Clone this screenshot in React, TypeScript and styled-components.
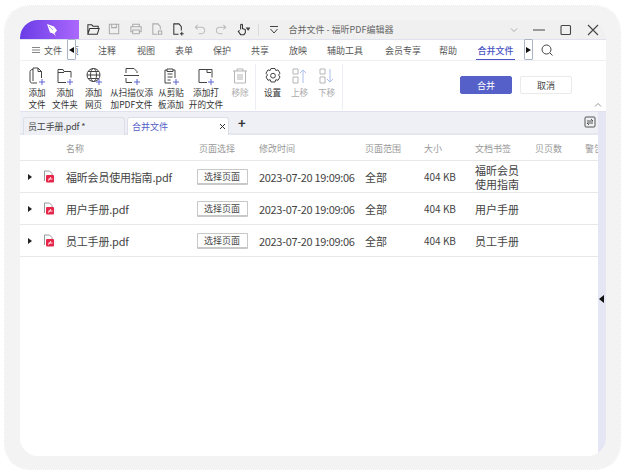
import React from 'react';
import styled, { createGlobalStyle } from 'styled-components';

const Global = createGlobalStyle`
  html, body { margin: 0; padding: 0; background: #fff; }
  body { font-family: "Noto Sans CJK SC", "Noto Sans", sans-serif; }
  * { box-sizing: border-box; }
`;

const Page = styled.div`
  width: 626px;
  height: 475px;
  padding: 6px 5px;
`;

const Frame = styled.div`
  width: 615px;
  height: 463px;
  padding: 14px 14px 13px 15px;
  background: #f3f3f3;
  border-radius: 24px;
  outline: 1px dotted #eaeaea;
`;

const Window = styled.div`
  height: 436px;
  background: #fff;
  border-radius: 18px;
  overflow: hidden;
  display: flex;
  flex-direction: column;
`;

const TitleBar = styled.div`
  height: 19px;
  flex: none;
  display: flex;
  align-items: center;
  background: #f0f0f0;
`;

const Logo = styled.div`
  width: 59px;
  height: 19px;
  flex: none;
  display: flex;
  align-items: center;
  justify-content: center;
  padding-left: 7px;
  background: linear-gradient(90deg, #6a3ce6, #ab68fd);
`;

const QuickBar = styled.div`
  display: flex;
  align-items: center;
  margin-left: 4px;
`;

const QuickSlot = styled.div`
  width: 21.3px;
  height: 19px;
  display: flex;
  align-items: center;
  justify-content: center;
`;

const TitleDivider = styled.div`
  width: 1px;
  height: 12px;
  margin: 0 9px 0 5px;
  background: #dcdcdc;
`;

const TitleText = styled.div`
  margin-left: 8px;
  flex: 1;
  font-size: 9px;
  line-height: 19px;
  color: #666;
  white-space: nowrap;
`;

const WindowControls = styled.div`
  display: flex;
  align-items: center;
  gap: 11px;
  margin-right: 5px;
`;

const RibbonTabs = styled.div`
  height: 22px;
  flex: none;
  display: flex;
  align-items: stretch;
  border-top: 1px solid #dfe1ee;
  border-bottom: 1px solid #f0f0f4;
  background: #fff;
  font-size: 9px;
  color: #555;
`;

const FileMenu = styled.div`
  width: 47px;
  padding-left: 12px;
  display: flex;
  align-items: center;
  gap: 4px;
`;

const ScrollBox = styled.div`
  width: 9px;
  height: 21px;
  margin-top: -1px;
  flex: none;
  display: flex;
  align-items: center;
  justify-content: center;
  background: #fff;
  border: 1px solid #aab6c6;
  border-radius: 1px;
`;

const RibbonList = styled.div`
  width: 448px;
  display: flex;
  align-items: stretch;
`;

const ClippedTab = styled.div`
  width: 3px;
  margin-right: 9px;
  flex: none;
  display: flex;
  align-items: center;
  justify-content: flex-end;
  overflow: hidden;
`;

const ClippedLabel = styled.span`
  flex: none;
`;

const RibbonTab = styled.div<{ $w: number; $active?: boolean }>`
  width: ${p => p.$w}px;
  flex: none;
  display: flex;
  align-items: center;
  justify-content: center;
  position: relative;
  margin-left: ${p => (p.$active ? '14px' : '0')};
  color: ${p => (p.$active ? '#4a55c4' : '#555')};
  font-weight: ${p => (p.$active ? 500 : 400)};
  &::after {
    content: '';
    display: ${p => (p.$active ? 'block' : 'none')};
    position: absolute;
    left: 0;
    right: 0;
    bottom: 0;
    height: 1.5px;
    background: #4a55c4;
  }
`;

const SearchSlot = styled.div`
  margin-left: 8px;
  display: flex;
  align-items: center;
`;

const Toolbar = styled.div`
  height: 51px;
  flex: none;
  display: flex;
  align-items: flex-start;
  background: #fff;
  border-bottom: 1px solid #dfe1ee;
  padding: 3px 0 0 3px;
  position: relative;
`;

const ToolGroup = styled.div<{ $w: number; $pad?: number }>`
  width: ${p => p.$w}px;
  height: 46px;
  flex: none;
  display: flex;
  padding-left: ${p => p.$pad || 0}px;
  border-right: 1px solid #eceef4;
`;

const Tool = styled.div<{ $w: number; $off?: boolean }>`
  width: ${p => p.$w}px;
  flex: none;
  display: flex;
  flex-direction: column;
  align-items: center;
  color: ${p => (p.$off ? '#aaa' : '#333')};
  font-size: 8.6px;
  line-height: 12px;
  text-align: center;
  white-space: nowrap;
`;

const ToolIcon = styled.div`
  height: 22px;
  padding-top: 2px;
  display: flex;
  align-items: center;
  justify-content: center;
`;

const ActionButton = styled.div<{ $primary?: boolean }>`
  width: 52px;
  height: 18px;
  display: flex;
  align-items: center;
  justify-content: center;
  font-size: 9px;
  border-radius: 2px;
  background: ${p => (p.$primary ? '#5560c8' : '#fff')};
  color: ${p => (p.$primary ? '#fff' : '#444')};
  border: 1px solid ${p => (p.$primary ? '#5560c8' : '#eaeaea')};
`;

const Actions = styled.div`
  display: flex;
  gap: 8px;
  margin: 12px 0 0 117px;
`;

const Collapse = styled.div`
  position: absolute;
  right: 4px;
  bottom: 3px;
  display: flex;
`;

const Body = styled.div`
  flex: 1;
  display: flex;
  min-height: 0;
`;

const Main = styled.div`
  flex: 1;
  min-width: 0;
  display: flex;
  flex-direction: column;
`;

const TabRow = styled.div`
  height: 23px;
  flex: none;
  display: flex;
  align-items: flex-end;
  gap: 2px;
  padding-left: 3px;
  background: #eef0f5;
  border-bottom: 2px solid #e4e7f0;
  position: relative;
`;

const DocTab = styled.div<{ $active?: boolean }>`
  width: 102px;
  height: 18px;
  margin-bottom: -2px;
  padding: 0 2px 0 4px;
  display: flex;
  align-items: center;
  justify-content: space-between;
  font-size: 9px;
  letter-spacing: ${p => (p.$active ? '0' : '-0.15px')};
  border: 1px solid #dcdfe8;
  border-bottom: none;
  border-radius: 3px 3px 0 0;
  background: ${p => (p.$active ? '#fff' : '#eef0f5')};
  color: ${p => (p.$active ? '#5560c8' : '#444')};
`;

const AddTab = styled.div`
  margin: 0 0 2px 7px;
  font-size: 13px;
  line-height: 16px;
  font-weight: 700;
  color: #333;
`;

const SwapIcon = styled.div`
  position: absolute;
  right: 2px;
  top: 4px;
  display: flex;
`;

const TableArea = styled.div`
  flex: 1;
  overflow: hidden;
`;

const SideStrip = styled.div`
  width: 8px;
  flex: none;
  background: #e4e7f3;
  display: flex;
  flex-direction: column;
  align-items: center;
  padding-top: 183px;
`;

const HeadRow = styled.div`
  height: 26px;
  padding-top: 2px;
  display: grid;
  grid-template-columns: 46px 133px 60px 106px 59px 51px 60px 50px 40px;
  align-items: center;
  border-bottom: 1px solid #e8e8e8;
  font-size: 9px;
  color: #999;
  white-space: nowrap;
`;

const Row = styled(HeadRow)`
  height: 32px;
  padding-top: 0;
  font-size: 11px;
  color: #444;
`;

const Lead = styled.div`
  display: flex;
  align-items: center;
  padding-left: 8px;
  gap: 11px;
`;

const Caret = styled.div`
  width: 0;
  height: 0;
  border-top: 3px solid transparent;
  border-bottom: 3px solid transparent;
  border-left: 4px solid #222;
`;

const NameCell = styled.div`
  letter-spacing: -0.2px;
`;

const PickButton = styled.div`
  width: 51px;
  height: 16px;
  margin-left: -2.5px;
  display: flex;
  align-items: center;
  justify-content: center;
  font-size: 9px;
  color: #444;
  background: #fff;
  border: 1px solid #c8c8c8;
  border-bottom-width: 2px;
  border-radius: 1px;
`;

const DateCell = styled.div`
  letter-spacing: -0.32px;
`;

const Bookmark = styled.div`
  line-height: 14px;
  white-space: normal;
`;

const SmallCell = styled.div`
  font-size: 10px;
`;

type IconProps = { size?: number; color?: string; children: React.ReactNode };

const Svg = ({ size = 18, color = '#444', children }: IconProps) => (
  <svg width={size} height={size} viewBox="0 0 18 18" fill="none" stroke={color} strokeWidth="1">
    {children}
  </svg>
);

const Plus = () => <path d="M11 15h6M14 12v6" stroke="#5a66d0" />;

const toolIcons: Record<string, React.ReactNode> = {
  file: (<><path d="M5 2.5C3.500 2.500 2 3 2 4.500V14c0 1.500 1 2 2.500 2H9" /><path d="M5 14V1h5l3.500 3.500V11" /><path d="M10 1v3.500h3.500" /><Plus /></>),
  folder: (<><path d="M10 15.500H2V2.500h5l1 2h7v6" /><path d="M2 5.500h6" /><Plus /></>),
  web: (<><circle cx="8.5" cy="8" r="6.500" /><ellipse cx="8.5" cy="8" rx="3" ry="6.500" /><path d="M2 8h13M3 4.500h11M3 11.500h11" /><Plus /></>),
  scan: (<><path d="M3 6V1.500h8l3 3V6M1 8.500h15M3 11v4.500h6" /><Plus /></>),
  clip: (<><path d="M9 16H3V3h2M11 3h2v8" /><path d="M5 2h6v2.500H5zM5.500 7h5M5.500 10h5M5.500 13h3" /><Plus /></>),
  open: (<><path d="M10 15.500H2V2.500h13v8" /><path d="M10 2.500v3h4" /><Plus /></>),
  trash: (<><path d="M2 4h14M6 4V2h6v2M3.500 4v12h11V4M7 7v6M9 7v6M11 7v6" /></>),
  gear: (<><path d="M7 1.500h4l.8 2 2.200-.6 2 3.300-1.500 1.800 1.500 2-2 3.300-2.200-.6-.8 2.300H7l-.8-2.300-2.200.6-2-3.300L3.500 8 2 6.200l2-3.300 2.200.6z" /><circle cx="9" cy="8.700" r="2.400" /></>),
  up: (<><path d="M2 2h5v5H2zM2 10h5v6H2z" /><path d="M12 16V3M9 6l3-3 3 3" stroke="#a9c0ea" /></>),
  down: (<><path d="M2 2h5v5H2zM2 10h5v6H2z" /><path d="M12 2v13M9 12l3 3 3-3" stroke="#a9c0ea" /></>),
};

const tools = [
  { key: 'file', w: 28, lines: ['添加', '文件'] },
  { key: 'folder', w: 28, lines: ['添加', '文件夹'] },
  { key: 'web', w: 29, lines: ['添加', '网页'] },
  { key: 'scan', w: 47, lines: ['从扫描仪添', '加PDF文件'] },
  { key: 'clip', w: 32, lines: ['从剪贴', '板添加'] },
  { key: 'open', w: 38, lines: ['添加打', '开的文件'] },
  { key: 'trash', w: 30, lines: ['移除'], off: true },
];

const tools2 = [
  { key: 'gear', w: 27, lines: ['设置'] },
  { key: 'up', w: 27, lines: ['上移'], off: true },
  { key: 'down', w: 27, lines: ['下移'], off: true },
];

const ribbon = [
  { label: '注释', w: 38 },
  { label: '视图', w: 40 },
  { label: '表单', w: 36 },
  { label: '保护', w: 40 },
  { label: '共享', w: 36 },
  { label: '放映', w: 40 },
  { label: '辅助工具', w: 54 },
  { label: '会员专享', w: 62 },
  { label: '帮助', w: 28 },
];

const rows = [
  { name: '福昕会员使用指南.pdf', mark: ['福昕会员', '使用指南'] },
  { name: '用户手册.pdf', mark: ['用户手册'] },
  { name: '员工手册.pdf', mark: ['员工手册'] },
];

const PdfIcon = () => (
  <svg width="12" height="13" viewBox="0 0 12 13" fill="none">
    <path d="M1.500 11V1h5l2.500 2.500V5" stroke="#999" />
    <rect x="3" y="5" width="8" height="7.500" rx="1" fill="#e8264a" />
    <path d="M5 10.500c2-1 2.500-2.500 2.500-3.500M5.500 9h4" stroke="#fff" strokeWidth="0.9" />
  </svg>
);

const ToolItem = ({ t }: { t: { key: string; w: number; lines: string[]; off?: boolean } }) => (
  <Tool $w={t.w} $off={t.off}>
    <ToolIcon>
      <Svg color={t.off ? '#b5b5b5' : '#444'}>{toolIcons[t.key]}</Svg>
    </ToolIcon>
    {t.lines.map(l => <div key={l}>{l}</div>)}
  </Tool>
);

const quick = [
  <path key="o" d="M2 13V3h4l1.500 1.500H13V7M2 13l2-6h10l-2 6z" />,
  <path key="s" d="M2.500 2.500h10v10h-10zM5 2.500v3.500h5V2.500" stroke="#aaa" />,
  <path key="p" d="M4 5V2.500h7V5M4 10.500H2V5h11v5.500h-2M4 8.500h7v4H4z" stroke="#aaa" />,
  <path key="n" d="M8 13H3V2h5.500L11 5v3M9 9.500h3.500v3.500H9z" stroke="#aaa" />,
  <path key="a" d="M8 13H3V2h5.500L11 5v4M9.500 12.500h4M11.500 10.500v4" stroke="#333" />,
  <path key="u" d="M5 3L2.500 5.500 5 8M3 5.500h6a3.500 3.500 0 0 1 0 7H6" stroke="#bbb" />,
  <path key="r" d="M10 3l2.500 2.500L10 8M12 5.500H6a3.500 3.500 0 0 0 0 7h3" stroke="#bbb" />,
  <path key="h" d="M6 8V3.500a1 1 0 0 1 2 0V7l3 1v3.500l-1.500 2H6L3.500 10 5 9M12.500 6.500h3l-1.500 2z" stroke="#333" />,
];

export default function App() {
  return (
    <Page>
      <Global />
      <Frame>
        <Window>
          <TitleBar>
            <Logo>
              <svg width="14" height="14" viewBox="0 0 14 14">
                <path d="M1 1l7 2.500 3 4-2.500 3 1.500 2.500-3-2.500-3-1z" fill="#fff" />
                <path d="M3 3l4 4" stroke="#a070f0" strokeWidth="0.7" />
              </svg>
            </Logo>
            <QuickBar>
              {quick.map((q, i) => (
                <QuickSlot key={i}>
                  <svg width="15" height="15" viewBox="0 0 16 16" fill="none" stroke="#333" strokeWidth="1.1">{q}</svg>
                </QuickSlot>
              ))}
              <TitleDivider />
              <svg width="12" height="12" viewBox="0 0 12 12" fill="none" stroke="#444" strokeWidth="1">
                <path d="M2 2.500h8M2.500 5l3.500 4 3.500-4" />
              </svg>
            </QuickBar>
            <TitleText>合并文件 - 福昕PDF编辑器</TitleText>
            <WindowControls>
              <svg width="12" height="12" viewBox="0 0 12 12" fill="none" stroke="#aaa" strokeWidth="1"><path d="M3 4.500l3 3 3-3" /></svg>
              <svg width="16" height="12" viewBox="0 0 16 12" fill="none" stroke="#444" strokeWidth="1.1"><path d="M2 6h12" /></svg>
              <svg width="16" height="12" viewBox="0 0 16 12" fill="none" stroke="#444" strokeWidth="1.1"><rect x="3" y="1.500" width="9.500" height="9" rx="1" /></svg>
              <svg width="16" height="12" viewBox="0 0 16 12" fill="none" stroke="#444" strokeWidth="1.1"><path d="M3 1l10 10M13 1L3 11" /></svg>
            </WindowControls>
          </TitleBar>

          <RibbonTabs>
            <FileMenu>
              <svg width="8" height="8" viewBox="0 0 8 8" stroke="#666" strokeWidth="0.8"><path d="M0 1.500h8M0 4h8M0 6.500h8" /></svg>
              文件
            </FileMenu>
            <ScrollBox>
              <svg width="5" height="6" viewBox="0 0 5 6"><path d="M5 0v6L0 3z" fill="#111" /></svg>
            </ScrollBox>
            <RibbonList>
              <ClippedTab><ClippedLabel>主页</ClippedLabel></ClippedTab>
              {ribbon.map(r => <RibbonTab key={r.label} $w={r.w}>{r.label}</RibbonTab>)}
              <RibbonTab $w={39} $active>合并文件</RibbonTab>
            </RibbonList>
            <ScrollBox>
              <svg width="5" height="6" viewBox="0 0 5 6"><path d="M0 0v6l5-3z" fill="#111" /></svg>
            </ScrollBox>
            <SearchSlot>
              <svg width="12" height="12" viewBox="0 0 12 12" fill="none" stroke="#444" strokeWidth="1"><circle cx="5.500" cy="5.500" r="4.500" /><path d="M9 9l2.500 2.500" /></svg>
            </SearchSlot>
          </RibbonTabs>

          <Toolbar>
            <ToolGroup $w={233}>
              {tools.map(t => <ToolItem key={t.key} t={t} />)}
            </ToolGroup>
            <ToolGroup $w={87} $pad={3}>
              {tools2.map(t => <ToolItem key={t.key} t={t} />)}
            </ToolGroup>
            <Actions>
              <ActionButton $primary>合并</ActionButton>
              <ActionButton>取消</ActionButton>
            </Actions>
            <Collapse>
              <svg width="8" height="6" viewBox="0 0 8 6" fill="none" stroke="#888" strokeWidth="0.9"><path d="M1 4.500L4 1.500l3 3" /></svg>
            </Collapse>
          </Toolbar>

          <Body>
            <Main>
              <TabRow>
                <DocTab>员工手册.pdf *</DocTab>
                <DocTab $active>
                  合并文件
                  <svg width="7" height="7" viewBox="0 0 7 7" stroke="#333" strokeWidth="1"><path d="M1 1l5 5M6 1L1 6" /></svg>
                </DocTab>
                <AddTab>+</AddTab>
                <SwapIcon>
                  <svg width="12" height="12" viewBox="0 0 12 12" fill="none" stroke="#444" strokeWidth="0.9">
                    <rect x="1" y="1" width="10" height="10" rx="1" />
                    <path d="M3 5h6L7 3M9 7H3l2 2" />
                  </svg>
                </SwapIcon>
              </TabRow>
              <TableArea>
                <HeadRow>
                  <div />
                  <div>名称</div>
                  <div>页面选择</div>
                  <div>修改时间</div>
                  <div>页面范围</div>
                  <div>大小</div>
                  <div>文档书签</div>
                  <div>贝页数</div>
                  <div>警告</div>
                </HeadRow>
                {rows.map(r => (
                  <Row key={r.name}>
                    <Lead><Caret /><PdfIcon /></Lead>
                    <NameCell>{r.name}</NameCell>
                    <div><PickButton>选择页面</PickButton></div>
                    <DateCell>2023-07-20 19:09:06</DateCell>
                    <div>全部</div>
                    <SmallCell>404 KB</SmallCell>
                    <Bookmark>{r.mark.map(m => <div key={m}>{m}</div>)}</Bookmark>
                    <div />
                    <div />
                  </Row>
                ))}
              </TableArea>
            </Main>
            <SideStrip>
              <svg width="6" height="8" viewBox="0 0 6 8"><path d="M5 0v8L0 4z" fill="#111" /></svg>
            </SideStrip>
          </Body>
        </Window>
      </Frame>
    </Page>
  );
}
